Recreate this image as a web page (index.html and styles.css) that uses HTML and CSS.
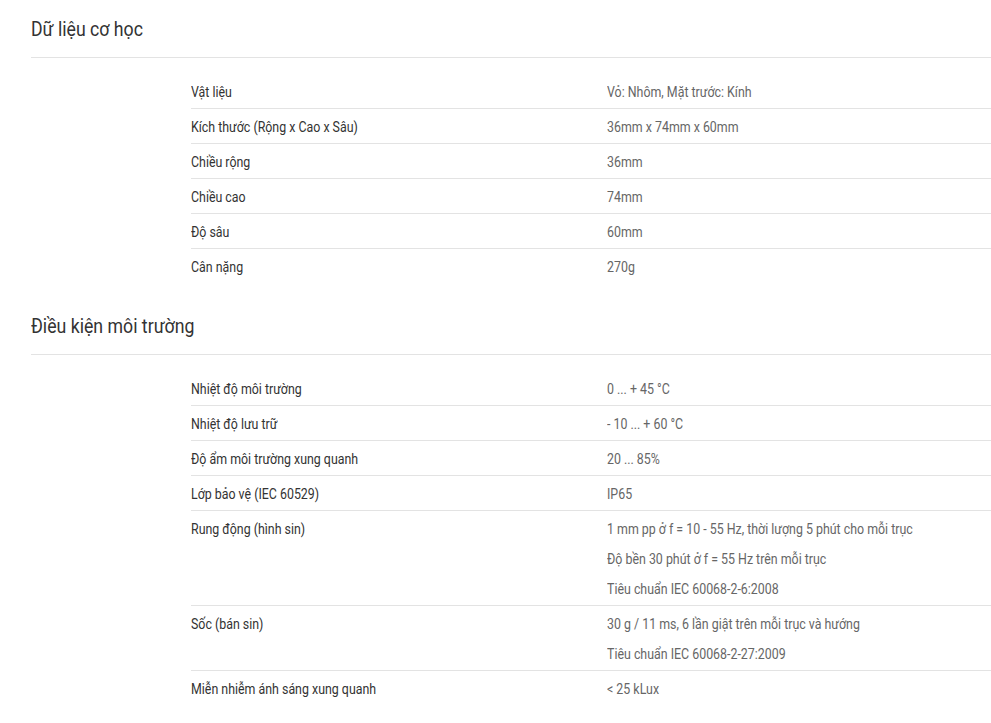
FILE: index.html
```html
<!DOCTYPE html>
<html lang="vi">
<head>
<meta charset="utf-8">
<title>Thông số kỹ thuật</title>
<link rel="stylesheet" href="styles.css">
</head>
<body>
<div class="page">
  <section class="spec">
    <h2 class="spec-title"><span class="cond">Dữ liệu cơ học</span></h2>
    <div class="spec-table">
      <div class="row"><div class="label">Vật liệu</div><div class="value"><p>Vỏ: Nhôm, Mặt trước: Kính</p></div></div>
      <div class="row"><div class="label">Kích thước (Rộng x Cao x Sâu)</div><div class="value"><p>36mm x 74mm x 60mm</p></div></div>
      <div class="row"><div class="label">Chiều rộng</div><div class="value"><p>36mm</p></div></div>
      <div class="row"><div class="label">Chiều cao</div><div class="value"><p>74mm</p></div></div>
      <div class="row"><div class="label">Độ sâu</div><div class="value"><p>60mm</p></div></div>
      <div class="row"><div class="label">Cân nặng</div><div class="value"><p>270g</p></div></div>
    </div>
  </section>
  <section class="spec">
    <h2 class="spec-title"><span class="cond">Điều kiện môi trường</span></h2>
    <div class="spec-table">
      <div class="row"><div class="label">Nhiệt độ môi trường</div><div class="value"><p>0 ... + 45 °C</p></div></div>
      <div class="row"><div class="label">Nhiệt độ lưu trữ</div><div class="value"><p>- 10 ... + 60 °C</p></div></div>
      <div class="row"><div class="label">Độ ẩm môi trường xung quanh</div><div class="value"><p>20 ... 85%</p></div></div>
      <div class="row"><div class="label">Lớp bảo vệ (IEC 60529)</div><div class="value"><p>IP65</p></div></div>
      <div class="row"><div class="label">Rung động (hình sin)</div><div class="value"><p>1 mm pp ở f = 10 - 55 Hz, thời lượng 5 phút cho mỗi trục</p><p>Độ bền 30 phút ở f = 55 Hz trên mỗi trục</p><p>Tiêu chuẩn IEC 60068-2-6:2008</p></div></div>
      <div class="row"><div class="label">Sốc (bán sin)</div><div class="value"><p>30 g / 11 ms, 6 lần giật trên mỗi trục và hướng</p><p>Tiêu chuẩn IEC 60068-2-27:2009</p></div></div>
      <div class="row"><div class="label">Miễn nhiễm ánh sáng xung quanh</div><div class="value"><p>&lt; 25 kLux</p></div></div>
    </div>
  </section>
</div>
</body>
</html>
```

FILE: styles.css
```css
html, body {
  margin: 0;
  padding: 0;
  background: #ffffff;
}

body {
  font-family: Roboto, "Noto Sans", "Liberation Sans", sans-serif;
  color: #333333;
  overflow: hidden;
}

.page {
  padding-left: 31px;
}

.spec {
  padding-top: 17px;
  padding-bottom: 14px;
}

.spec-title {
  margin: 0;
  font-size: 20px;
  font-weight: 400;
  line-height: 24px;
  color: #333333;
  padding-bottom: 16px;
  border-bottom: 1px solid #e3e3e3;
}

/* narrow the glyphs to the condensed look of the reference */
.cond {
  display: inline-block;
  white-space: nowrap;
  transform: scaleX(0.885);
  transform-origin: left center;
}

.spec-table {
  margin-top: 16px;
  margin-left: 160px;
}

.row {
  display: grid;
  grid-template-columns: 416px 1fr;
  padding: 8px 0 6px;
  border-bottom: 1px solid #e3e3e3;
  font-size: 14px;
  line-height: 20px;
}

.row:last-child {
  border-bottom: none;
}

.label {
  color: #333333;
  white-space: nowrap;
  transform: scaleX(0.885);
  transform-origin: left center;
}

.value {
  color: #666666;
}

.value p {
  margin: 0;
  white-space: nowrap;
  transform: scaleX(0.885);
  transform-origin: left center;
}

.value p + p {
  margin-top: 10px;
}
```
